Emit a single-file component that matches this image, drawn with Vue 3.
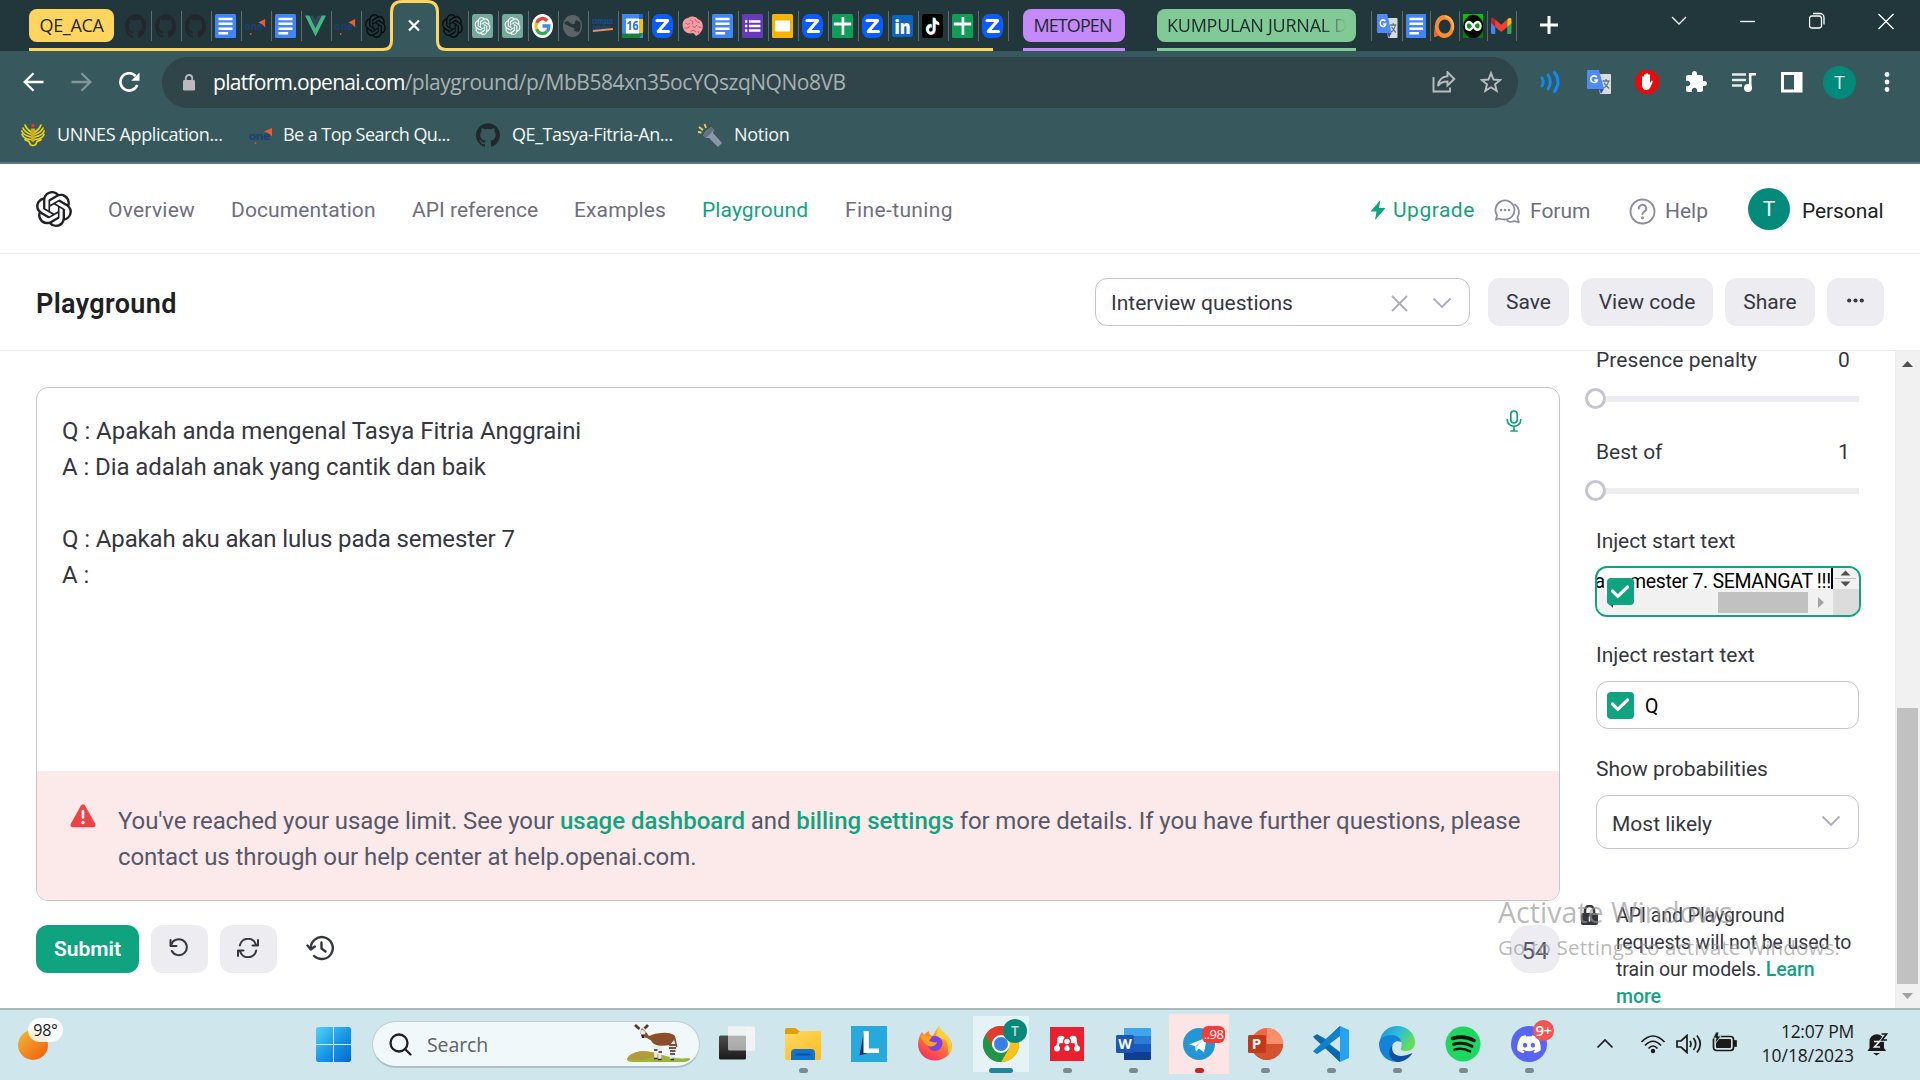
<script setup>
const OPENAI = 'M22.2819 9.8211a5.9847 5.9847 0 0 0-.5157-4.9108 6.0462 6.0462 0 0 0-6.5098-2.9A6.0651 6.0651 0 0 0 4.9807 4.1818a5.9847 5.9847 0 0 0-3.9977 2.9 6.0462 6.0462 0 0 0 .7427 7.0966 5.98 5.98 0 0 0 .511 4.9107 6.051 6.051 0 0 0 6.5146 2.9001A5.9847 5.9847 0 0 0 13.2599 24a6.0557 6.0557 0 0 0 5.7718-4.2058 5.9894 5.9894 0 0 0 3.9977-2.9001 6.0557 6.0557 0 0 0-.7475-7.0729zm-9.022 12.6081a4.4755 4.4755 0 0 1-2.8764-1.0408l.1419-.0804 4.7783-2.7582a.7948.7948 0 0 0 .3927-.6813v-6.7369l2.02 1.1686a.071.071 0 0 1 .038.052v5.5826a4.504 4.504 0 0 1-4.4945 4.4944zm-9.6607-4.1254a4.4708 4.4708 0 0 1-.5346-3.0137l.142.0852 4.783 2.7582a.7712.7712 0 0 0 .7806 0l5.8428-3.3685v2.3324a.0804.0804 0 0 1-.0332.0615L9.74 19.9502a4.4992 4.4992 0 0 1-6.1408-1.6464zM2.3408 7.8956a4.485 4.485 0 0 1 2.3655-1.9728V11.6a.7664.7664 0 0 0 .3879.6765l5.8144 3.3543-2.0201 1.1685a.0757.0757 0 0 1-.071 0l-4.8303-2.7865A4.504 4.504 0 0 1 2.3408 7.872zm16.5963 3.8558L13.1038 8.364 15.1192 7.2a.0757.0757 0 0 1 .071 0l4.8303 2.7913a4.4944 4.4944 0 0 1-.6765 8.1042v-5.6772a.79.79 0 0 0-.407-.667zm2.0107-3.0231l-.142-.0852-4.7735-2.7818a.7759.7759 0 0 0-.7854 0L9.409 9.2297V6.8974a.0662.0662 0 0 1 .0284-.0615l4.8303-2.7866a4.4992 4.4992 0 0 1 6.6802 4.66zM8.3065 12.863l-2.02-1.1638a.0804.0804 0 0 1-.038-.0567V6.0742a4.4992 4.4992 0 0 1 7.3757-3.4537l-.142.0805L8.704 5.459a.7948.7948 0 0 0-.3927.6813zm1.0976-2.3654l2.602-1.4998 2.6069 1.4998v2.9994l-2.5974 1.4997-2.6067-1.4997Z'
const GITHUB = 'M12 .297c-6.63 0-12 5.373-12 12 0 5.303 3.438 9.8 8.205 11.385.6.113.82-.258.82-.577 0-.285-.01-1.04-.015-2.04-3.338.724-4.042-1.61-4.042-1.61C4.422 18.07 3.633 17.7 3.633 17.7c-1.087-.744.084-.729.084-.729 1.205.084 1.838 1.236 1.838 1.236 1.07 1.835 2.809 1.305 3.495.998.108-.776.417-1.305.76-1.605-2.665-.3-5.466-1.332-5.466-5.93 0-1.31.465-2.38 1.235-3.22-.135-.303-.54-1.523.105-3.176 0 0 1.005-.322 3.3 1.23.96-.267 1.98-.399 3-.405 1.02.006 2.04.138 3 .405 2.28-1.552 3.285-1.23 3.285-1.23.645 1.653.24 2.873.12 3.176.765.84 1.23 1.91 1.23 3.22 0 4.61-2.805 5.625-5.475 5.92.42.36.81 1.096.81 2.22 0 1.606-.015 2.896-.015 3.286 0 .315.21.69.825.57C20.565 22.092 24 17.592 24 12.297c0-6.627-5.373-12-12-12'
const TIKTOK = 'M12.525.02c1.31-.02 2.61-.01 3.91-.02.08 1.53.63 3.09 1.75 4.17 1.12 1.11 2.7 1.62 4.24 1.79v4.03c-1.44-.05-2.89-.35-4.2-.97-.57-.26-1.1-.59-1.62-.93-.01 2.92.01 5.84-.02 8.75-.08 1.4-.54 2.79-1.35 3.94-1.31 1.92-3.58 3.17-5.91 3.21-1.43.08-2.86-.31-4.08-1.03-2.02-1.19-3.44-3.37-3.65-5.71-.02-.5-.03-1-.01-1.49.18-1.9 1.12-3.72 2.58-4.96 1.66-1.44 3.98-2.13 6.15-1.72.02 1.48-.04 2.96-.04 4.44-.99-.32-2.15-.23-3.02.37-.63.41-1.11 1.04-1.36 1.75-.21.51-.15 1.07-.14 1.61.24 1.64 1.82 3.02 3.5 2.87 1.12-.01 2.19-.66 2.77-1.61.19-.33.4-.67.41-1.06.1-1.79.06-3.57.07-5.36.01-4.03-.01-8.05.02-12.07z'
const one = '<text x="-.5" y="16.500" font-family="Open Sans, sans-serif" font-weight="700" font-size="11" textLength="21" lengthAdjust="spacingAndGlyphs" fill="#1d3f73">one</text><path d="M15 8.500l8-3.500v8.500l-3-3z" fill="#ee5a36"/><circle cx="6.500" cy="20" r="1" fill="#d9532f"/>'

/* Every glyph is drawn on a 24 × 24 grid. */
const glyphs = {
  github: `<path d="${GITHUB}" fill="#22272b"/>`,
  docs: '<rect width="24" height="24" rx="1.500" fill="#4285f4"/><path d="M4 4.900h16M4 9.800h16M4 14.700h16M4 19.200h11" stroke="#fff" stroke-width="2.500"/>',
  one,
  vue: '<path d="M0 1.500h5l7 12.500 7-12.500h5L12 22.500z" fill="#41b883"/><path d="M5 1.500h4.500L12 6l2.500-4.500H19L12 14z" fill="#35495e"/>',
  openai: `<path d="${OPENAI}" fill="#090d0e"/>`,
  gpt: `<rect width="24" height="24" rx="2.500" fill="#74aa9c"/><g transform="translate(3 3) scale(.75)"><path d="${OPENAI}" fill="#fff"/></g>`,
  google: '<circle cx="12" cy="12" r="12" fill="#fff"/><g fill="none" stroke-width="3.500"><path d="M5.200 9A7.500 7.500 0 0 1 17.400 6.800" stroke="#ea4335"/><path d="M5.200 15.200a7.500 7.500 0 0 1 0-6.400" stroke="#fbbc05"/><path d="M17.100 17.500a7.500 7.500 0 0 1-11.900-2.300" stroke="#34a853"/><path d="M12 12h7.400a7.500 7.500 0 0 1-2.300 5.500" stroke="#4285f4"/></g>',
  globe: '<circle cx="12" cy="12" r="11" fill="#5c6367"/><path d="M3 8c3-1 5-1 6 1 2 0 2 2 5 1l2-4 5 2c1 5 0 8-2 10l-5-1 0-3-4-1-4-2-3-1z" fill="#24363a"/><path d="M9 14.500l5 1.500-2 5-4-2z" fill="#5c6367"/>',
  campus: '<text x="0" y="10" font-family="Open Sans, sans-serif" font-weight="700" font-size="8.500" textLength="24" lengthAdjust="spacingAndGlyphs" fill="#12519b">compus</text><text x="1" y="16" font-family="Open Sans, sans-serif" font-weight="700" font-size="7" textLength="20" lengthAdjust="spacingAndGlyphs" fill="#12519b">connect</text><path d="M1 16l23-2v2L1 18z" fill="#f08e4b"/>',
  cal: '<path d="M0 0h22a2 2 0 0 1 2 2v22H0z" fill="#4285f4"/><path d="M19.500 5H24v14h-4.500z" fill="#fbbc04"/><path d="M19.500 0h2.500a2 2 0 0 1 2 2v3h-4.500z" fill="#1967d2"/><path d="M0 19.500h24L19.500 24H0z" fill="#188038"/><path d="M4.500 4.500h15v15h-15z" fill="#fff"/><text x="12" y="16.500" text-anchor="middle" font-family="Open Sans, sans-serif" font-weight="700" font-size="12" fill="#1f6fd8">16</text>',
  zoom: '<rect width="24" height="24" rx="8" fill="#0b5cff"/><path d="M5.500 6.500h12.500L7 17.500h12" fill="none" stroke="#fff" stroke-width="3.200" stroke-linejoin="round" stroke-linecap="round"/>',
  brain: '<path d="M3 17C-1 12 0 5 7 4c4-3 10-1 11 1 5 1 7 6 5 11l-3 4-4 2-3-3c-4 1-8 0-10-2z" fill="#f59ba2"/><path d="M4 9q3 3 5 0M9 6q4 0 3 4M15 5q1 4 5 3M3 14q4 1 6-2M12 12q3 3 5-1M19 12q1 3 3 1M10 17q4-2 6 1M18 17l2 3" fill="none" stroke="#c8556a" stroke-width="1"/>',
  forms: '<rect width="24" height="24" rx="1.500" fill="#673ab7"/><path d="M8 7.500h13M8 12h13M8 16.500h13" stroke="#fff" stroke-width="2.500"/><path d="M3.500 7.500h2.500M3.500 12h2.500M3.500 16.500h2.500" stroke="#fff" stroke-width="2.500"/>',
  slides: '<rect width="24" height="24" rx="1.500" fill="#f4b400"/><path d="M3.500 6.500h17v11h-17z" fill="#fff"/>',
  sheets: '<rect width="24" height="24" rx="1.500" fill="#0f9d58"/><path d="M2 10h20M12.500 3v18" stroke="#fff" stroke-width="3"/>',
  linkedin: '<rect width="24" height="22" rx="2" y="1" fill="#0a66c2"/><text x="12" y="19.500" text-anchor="middle" font-family="Open Sans, sans-serif" font-weight="800" font-size="18.500" fill="#fff">in</text>',
  tiktok: `<rect width="24" height="24" rx="3" fill="#000"/><g transform="translate(3.200 3.500) scale(.7)"><path d="${TIKTOK}" fill="#25f4ee"/></g><g transform="translate(4.400 4.500) scale(.7)"><path d="${TIKTOK}" fill="#fe2c55"/></g><g transform="translate(3.800 4) scale(.7)"><path d="${TIKTOK}" fill="#fff"/></g>`,
  translate: '<path d="M9 4h14a1 1 0 0 1 1 1v18a1 1 0 0 1-1 1H13z" fill="#d9dcdf"/><path d="M1 0h11l5 19H1a1 1 0 0 1-1-1V1a1 1 0 0 1 1-1z" fill="#4f8bf5"/><path d="M17 19h-5l2 5z" fill="#3a4fc0"/><path d="M15.500 11h7M19 9v2M21.500 11c-.500 3-3 6-5 7M17 13l5 5.500" stroke="#5a7682" stroke-width="1.300" fill="none"/><path d="M9.800 7.300A3.300 3.300 0 1 0 10.300 10H7.200" fill="none" stroke="#fff" stroke-width="1.600"/>',
  orange: '<path d="M12 1a11.500 11.500 0 1 1-7 20.500L0 23l1-9A11.500 11.500 0 0 1 12 1z" fill="#f78c33"/><path d="M1.500 9.500L0 23l6-1.500A11 11 0 0 1 1.500 9.500z" fill="#f15a2b"/><circle cx="12.500" cy="12.500" r="7" fill="#21363a"/><path d="M13 2.500a10 10 0 0 1 9 13" fill="none" stroke="#fdb94d" stroke-width="2.200"/>',
  loop: '<path d="M0 0h24v24H0z" fill="#00c800"/><path d="M0 13h24v11H0z" fill="#067a0c"/><circle cx="12" cy="12.500" r="11.800" fill="#050805"/><path d="M12 12c-2.500-4-5-4.500-7-3.500s-2.500 5.500 0 6.800 5 .7 7-3.300 5-4.500 7-3.500 2.500 5.500 0 6.800-4.500.7-7-3.300z" fill="#0d9a1c" stroke="#fff" stroke-width="2.400"/>',
  gmail: '<path d="M0 6.500h5V20H1.500A1.500 1.500 0 0 1 0 18.500z" fill="#4285f4"/><path d="M19 8h5v10.500a1.500 1.500 0 0 1-1.500 1.500H19z" fill="#34a853"/><path d="M19 5.500l2-1.500c1.500-1 3 .200 3 1.800V9l-5 4z" fill="#fbbc04"/><path d="M5 5.500L3 4C1.500 3 0 4.200 0 5.800V9l5 4z" fill="#c5221f"/><path d="M5 5.500l7 5.300 7-5.300V13l-7 5-7-5z" fill="#ea4335"/>',
  garuda: '<g fill="none" stroke="#ecd510" stroke-width="1.700" stroke-linecap="round"><path d="M10 9C7 7 5 5 4 2M10 11.500C6 10 3 8 2 5M10 14C5 13 2 11 .8 8M9.500 16.500C5 16 2 14 1 11.500M14 9c3-2 5-4 6-7M14 11.500c4-1.500 7-3.500 8-6.500M14 14c5-1 8-3 9.200-6M14.500 16.500c4.500-.5 7.500-2.500 8.500-5"/><path d="M4 16.500c2 1.500 4 1 4.500 3 .5 4 6.500 4 7 0 .5-2 2.500-1.500 4.500-3"/></g><path d="M10 5.500h4v12l-2 2-2-2z" fill="#c9ae18"/><circle cx="12" cy="2.500" r="1.700" fill="#e9352b"/>',
  torch: '<path d="M8 8l5-4 3 3-1 3 9 10-4 4-9-9-3 0-3-3z" fill="#8b97a8"/><path d="M5 12l8-8 3 3-8 8z" fill="#66717f"/><path d="M6.500 1l1.500 4M1 4l4 3M0 9l3.500.5" stroke="#f6cf57" stroke-width="1.800"/>',
  waves: '<g fill="none" stroke="#118af2" stroke-width="3" stroke-linecap="round"><path d="M3 8q2.500 4 0 8"/><path d="M9 5q4.500 7 0 14"/><path d="M15.500 2.500q7 9.500 0 19"/></g>',
  adblock: '<path d="M7 0h10l7 7v10l-7 7H7l-7-7V7z" fill="#e40d0d"/><path d="M7 13V7.300a1 1 0 0 1 2 0V5.200a1 1 0 0 1 2 0V4.200a1 1 0 0 1 2 0v1a1 1 0 0 1 2 0V13l1.500-2.500q1.800 0 1.200 1.500L15 18q-1 2-3.500 2Q7 20 7 15z" fill="#fff"/>',
  puzzle: '<path d="M20.500 11H19V7c0-1.100-.9-2-2-2h-4V3.500C13 2.120 11.880 1 10.500 1S8 2.120 8 3.500V5H4c-1.100 0-1.990.9-1.990 2v3.800H3.500c1.490 0 2.700 1.210 2.700 2.700s-1.210 2.700-2.700 2.700H2V20c0 1.100.9 2 2 2h3.800v-1.500c0-1.490 1.210-2.700 2.700-2.700 1.490 0 2.700 1.210 2.700 2.700V22H17c1.100 0 2-.9 2-2v-4h1.500c1.380 0 2.500-1.120 2.500-2.500S21.880 11 20.500 11z" fill="#fff"/>',
  media: '<path d="M0 4.500h14M0 10h14M0 15.500h10" stroke="#e6ecec" stroke-width="2.300"/><path d="M18.200 17.500V4.200H24" fill="none" stroke="#fff" stroke-width="2.600"/><circle cx="16" cy="18" r="4" fill="#fff"/>',
  panel: '<path d="M2.500 3.500h18.500v17.500H2.500z" fill="none" stroke="#fff" stroke-width="3"/><path d="M14 3h7v18h-7z" fill="#fff"/>',
}
const tabsLeft = ['github', 'github', 'github', 'docs', 'one', 'docs', 'vue', 'one', 'openai']
const tabsRight = ['openai', 'gpt', 'gpt', 'google', 'globe', 'campus', 'cal', 'zoom', 'brain', 'docs', 'forms', 'slides', 'zoom', 'sheets', 'zoom', 'linkedin', 'tiktok', 'sheets', 'zoom']
const tabsEnd = ['translate', 'docs', 'orange', 'loop', 'gmail']
const extensions = ['waves', 'translate', 'adblock', 'puzzle', 'media', 'panel']
const bookmarks = [
  { icon: 'garuda', label: 'UNNES Application...', cls: 'b1' },
  { icon: 'one', label: 'Be a Top Search Qu...', cls: 'b2' },
  { icon: 'github', label: 'QE_Tasya-Fitria-An...', cls: 'b3' },
  { icon: 'torch', label: 'Notion', cls: 'b4' },
]
const nav = [
  { label: 'Overview', cls: 'n1' }, { label: 'Documentation', cls: 'n2' }, { label: 'API reference', cls: 'n3' },
  { label: 'Examples', cls: 'n4' }, { label: 'Playground', cls: 'n5 active' }, { label: 'Fine-tuning', cls: 'n6' },
]

/* Taskbar apps, drawn on a 36 × 36 grid. */
const apps = [
  { name: 'tasks', svg: '<rect y="9.500" width="27" height="24" rx="1.500" fill="url(#dk)"/><rect x="9" y=".5" width="27" height="24" rx="1.500" fill="#f4f4f4" opacity=".62"/><path d="M27 1h8a1 1 0 0 1 1 1v22a1 1 0 0 1-1 1h-8z" fill="#f3f5f5" opacity=".7"/><path d="M9 .5h26v9H9z" fill="#f3f5f5" opacity=".7"/><defs><linearGradient id="dk" x2="0" y2="1"><stop stop-color="#4d4d4d"/><stop offset="1" stop-color="#1b1b1b"/></linearGradient></defs>' },
  { name: 'explorer', run: 1, svg: '<path d="M0 3.500A1.500 1.500 0 0 1 1.500 2h9L14 5h20a2 2 0 0 1 2 2v5H0z" fill="#dfa10b"/><path d="M0 8h12l3-3h19.500A1.500 1.500 0 0 1 36 6.500v26a1.500 1.500 0 0 1-1.500 1.500h-33A1.500 1.500 0 0 1 0 32.500z" fill="url(#fo)"/><path d="M6 34V27a4 4 0 0 1 4-4h16a4 4 0 0 1 4 4v7z" fill="#0f74cf"/><path d="M10.500 28.500h15" stroke="#0b4f94" stroke-width="1.800"/><defs><linearGradient id="fo" x2=".7" y2="1"><stop stop-color="#ffd867"/><stop offset="1" stop-color="#fcc01f"/></linearGradient></defs>' },
  { name: 'ledger', svg: '<rect width="36" height="36" fill="#27aadb"/><path d="M13 5L8.500 29.500 13 27z" fill="#0b2f66"/><path d="M8.500 29.500l4-4H22z" fill="#0b2f66"/><path d="M12.500 5h5.300v17.500H28V27H12.500z" fill="#fff"/>' },
  { name: 'firefox', svg: '<path d="M18 34.500C8 34.500 1 27 1 18c0-5 2-9 4-12l2 3q2-3 5-4c0 3 1 4 3 5 2-1 3-5 7-10 1 4 4 5 7 9 4 4 6 7 6 11 0 8-8 14.500-17 14.500z" fill="url(#ff)"/><path d="M22 0c1 4 4 5 7 9 7 7 7 14 3 19-2-4 0-10-4-14-3-2-8-1-9-5q1-5 3-9z" fill="#ffd83b" opacity=".85"/><circle cx="18" cy="17.500" r="7.500" fill="#7a44e0"/><path d="M3 8c3 2 8 1 12 3l-3 4c4 1 6 2 8 1-2 6-9 5-10 3-3-2-6-5-7-11z" fill="#ff9f26"/><defs><linearGradient id="ff" x1=".8" x2=".2" y2="1"><stop stop-color="#ffd02e"/><stop offset=".55" stop-color="#ff6b36"/><stop offset="1" stop-color="#ee2a6e"/></linearGradient></defs>' },
  { name: 'chrome', tile: 'tile-on', run: 2, badge: 'T', svg: '<circle cx="18" cy="18" r="18" fill="#34a853"/><path d="M2.400 9A18 18 0 0 1 33.600 9H18a9 9 0 0 0-7.800 13.500z" fill="#e33b2e"/><path d="M33.600 9A18 18 0 0 1 18 36l7.800-13.500A9 9 0 0 0 18 9z" fill="#fbc116"/><path d="M18 36A18 18 0 0 1 2.400 9l7.800 13.500A9 9 0 0 0 25.800 22.500z" fill="#229447"/><circle cx="18" cy="18" r="9" fill="#fff"/><circle cx="18" cy="18" r="7" fill="#3a7ee8"/>' },
  { name: 'mendeley', run: 1, svg: '<rect x="1" y="1" width="34" height="34" fill="#e9202f"/><g fill="#fff"><circle cx="12" cy="13.500" r="3.800"/><circle cx="24" cy="13.500" r="3.800"/><circle cx="8" cy="22.500" r="3"/><circle cx="28" cy="22.500" r="3"/><circle cx="18" cy="22.500" r="2.600"/></g><g fill="none" stroke="#fff" stroke-width="2.600"><path d="M10 14l-2 8M26 14l2 8M12 15l6 2 6-2M18 18v4"/></g><circle cx="18" cy="15.500" r="3.400" fill="#fff" stroke="#e9202f" stroke-width="1.300"/>' },
  { name: 'word', run: 1, svg: '<path d="M9 2h26a1 1 0 0 1 1 1v7H9z" fill="#41a5ee"/><path d="M9 10h27v8H9z" fill="#2b7cd3"/><path d="M9 18h27v8H9z" fill="#185abd"/><path d="M9 26h27v7a1 1 0 0 1-1 1H9z" fill="#103f91"/><rect x="1" y="9" width="18" height="18" rx="1.500" fill="#1a56b8"/><text x="10" y="23" text-anchor="middle" font-family="Open Sans, sans-serif" font-weight="700" font-size="14" fill="#fff">W</text>' },
  { name: 'telegram', tile: 'tile-alert', run: 3, badge: '..98', svg: '<circle cx="18" cy="18" r="16" fill="#2596d3"/><path d="M8 18.500L26 11.500 23 26.500l-5-4-3 3-1-5.500z" fill="#fff"/><path d="M14 20l8-6-6 7-1 4.500z" fill="#b9d9ec"/>' },
  { name: 'powerpoint', run: 1, svg: '<circle cx="20" cy="18" r="16" fill="#ed6c47"/><path d="M20 2a16 16 0 0 1 16 16H20z" fill="#ff8f6b"/><path d="M4 18h32a16 16 0 0 1-32 0z" fill="#d35230"/><rect x="1" y="9" width="18" height="18" rx="1.500" fill="#c13b1b"/><text x="9.500" y="23" text-anchor="middle" font-family="Open Sans, sans-serif" font-weight="700" font-size="15" fill="#fff">P</text>' },
  { name: 'vscode', run: 1, svg: '<path d="M27 0l-14 13L4 8.200 0 10.500 10 19 0 25.500l4 2.500 9-6 14 14z" fill="#0c7dc6"/><path d="M4 8.200L27 27v9L.5 11.500z" fill="#0a68ad"/><path d="M4 28l23-18.500V0L.5 24.800z" fill="#0f80cc"/><path d="M27 0l9 4v28l-9 4z" fill="#27a1f0"/><path d="M16.500 18L27 10v16z" fill="#cfe7ec"/>' },
  { name: 'edge', run: 1, svg: '<path d="M1 14C3 5 10 0 18 0c10 0 18 7 18 16 0 6-4 9-9 9-4 0-6-1-5-3 3-7-3-11-9-11-5 0-9 1-12 3z" fill="url(#e1)"/><path d="M0 18c0-6 6-9 13-9 6 0 9 4 9 7-4-2-9 0-9 6 0 8 6 13 13 12-15 6-26-4-26-16z" fill="#1283d9"/><path d="M13.500 20c-2 7 4 14 20 7-4 7-12 10-17 8.500C9 32 8 24 13.500 20z" fill="#114f9e"/><defs><linearGradient id="e1" x1="0" x2="1" y2=".5"><stop stop-color="#1a8fd8"/><stop offset=".55" stop-color="#30c0d5"/><stop offset="1" stop-color="#65dd55"/></linearGradient></defs>' },
  { name: 'spotify', run: 1, svg: '<circle cx="18" cy="18" r="17.500" fill="#1ed760"/><g fill="none" stroke="#06140a" stroke-linecap="round"><path d="M7.500 12.500q11.500-3.500 21.500 2" stroke-width="3.600"/><path d="M8.500 18.300q10-2.800 18.500 1.900" stroke-width="3"/><path d="M9.500 23.600q8-2.200 15.500 1.700" stroke-width="2.500"/></g>' },
  { name: 'discord', run: 1, badge: '9+', svg: '<circle cx="18" cy="18" r="18" fill="#5865f2"/><g transform="translate(6.200 6.500) scale(.98)"><path d="M20.317 4.370a19.790 19.790 0 0 0-4.885-1.515.074.074 0 0 0-.079.037c-.211.375-.445.865-.608 1.250a18.270 18.270 0 0 0-5.487 0 12.640 12.640 0 0 0-.618-1.250.077.077 0 0 0-.078-.037 19.740 19.740 0 0 0-4.885 1.515.07.07 0 0 0-.032.028C.533 9.046-.319 13.580.099 18.058a.082.082 0 0 0 .031.056 19.900 19.900 0 0 0 5.993 3.029.078.078 0 0 0 .084-.027c.462-.630.873-1.295 1.226-1.994a.076.076 0 0 0-.041-.106 13.100 13.100 0 0 1-1.872-.892.077.077 0 0 1-.008-.128l.372-.291a.074.074 0 0 1 .077-.010c3.928 1.793 8.180 1.793 12.062 0a.074.074 0 0 1 .078.009l.373.292a.077.077 0 0 1-.006.128 12.300 12.300 0 0 1-1.873.891.077.077 0 0 0-.041.107c.360.698.772 1.363 1.225 1.993a.076.076 0 0 0 .084.029 19.840 19.840 0 0 0 6.002-3.030.077.077 0 0 0 .032-.055c.500-5.177-.838-9.674-3.549-13.660a.061.061 0 0 0-.031-.029zM8.020 15.331c-1.183 0-2.157-1.086-2.157-2.419s.956-2.419 2.157-2.419c1.211 0 2.176 1.095 2.157 2.419 0 1.333-.956 2.419-2.157 2.419zm7.975 0c-1.183 0-2.157-1.086-2.157-2.419s.955-2.419 2.157-2.419c1.211 0 2.176 1.095 2.157 2.419 0 1.333-.946 2.419-2.157 2.419z" fill="#fff"/></g>' },
]
</script>

<template>
  <div class="screen">
    <header class="tabstrip">
      <div class="group">
        <span class="chip yellow">QE_ACA</span>
        <div v-for="(t, i) in tabsLeft" :key="'l' + i" class="tab" :class="{ last: i === 8 }">
          <svg viewBox="0 0 24 24" preserveAspectRatio="none" v-html="glyphs[t]"></svg>
        </div>
        <div class="tab-active">
          <svg width="70" height="51" viewBox="0 0 70 51" fill="none">
            <path d="M5 51V49.500Q13.500 49.500 13.500 41V12Q13.500 1.500 24 1.500H49Q59.500 1.500 59.500 12V41Q59.500 49.500 68 49.500V51z" fill="#37595d" />
            <path d="M0 49.500H5Q13.500 49.500 13.500 41V12Q13.500 1.500 24 1.500H49Q59.500 1.500 59.500 12V41Q59.500 49.500 68 49.500H70" stroke="#ffd55f" stroke-width="3" />
            <path d="M31 20.500l10 10M41 20.500l-10 10" stroke="#fff" stroke-width="2.200" />
          </svg>
        </div>
        <div v-for="(t, i) in tabsRight" :key="'r' + i" class="tab">
          <svg viewBox="0 0 24 24" preserveAspectRatio="none" v-html="glyphs[t]"></svg>
        </div>
      </div>
      <div class="closed-group purple"><span class="chip">METOPEN</span></div>
      <div class="closed-group green"><span class="chip"><span class="fade">KUMPULAN JURNAL D</span></span></div>
      <div class="loose">
        <div v-for="(t, i) in tabsEnd" :key="'e' + i" class="tab">
          <svg viewBox="0 0 24 24" preserveAspectRatio="none" v-html="glyphs[t]"></svg>
        </div>
      </div>
      <svg class="plus" width="20" height="20" viewBox="0 0 20 20"><path d="M10 1v18M1 10h18" stroke="#fff" stroke-width="3" /></svg>
      <div class="window-buttons">
        <svg width="16" height="18" viewBox="0 0 16 18"><path d="M1 5l7 7 7-7" /></svg>
        <svg width="16" height="18" viewBox="0 0 16 18"><path d="M0 9.500h15" /></svg>
        <svg width="16" height="18" viewBox="0 0 16 18"><rect x=".5" y="4" width="12" height="12" rx="2.500" /><path d="M4 1.500h7a4 4 0 0 1 4 4v7" /></svg>
        <svg width="16" height="18" viewBox="0 0 16 18"><path d="M.5 2l15 15M15.500 2l-15 15" /></svg>
      </div>
    </header>

    <div class="toolbar">
      <div class="history">
        <svg width="21" height="20" viewBox="0 0 21 20"><path d="M20.500 10H2M10.500 1.200L1.700 10l8.800 8.800" stroke="#fff" stroke-width="2.300" fill="none" /></svg>
        <svg width="21" height="20" viewBox="0 0 21 20"><path d="M.5 10H19M10.500 1.200l8.800 8.800-8.800 8.800" stroke="#81979a" stroke-width="2.300" fill="none" /></svg>
        <svg width="21" height="20" viewBox="0 0 21 20"><path d="M18.200 13A8.700 8.700 0 1 1 16.500 4" stroke="#fff" stroke-width="2.600" fill="none" /><path d="M20.500.5v8.300h-8.300z" fill="#fff" /></svg>
      </div>
      <div class="omnibox">
        <svg class="lock" width="12" height="17" viewBox="0 0 12 17"><rect y="6" width="12" height="10.500" rx="1.300" fill="#b9b9bf" /><path d="M2.800 6.500V4.200a3.200 3.200 0 0 1 6.400 0v2.300" stroke="#b9b9bf" stroke-width="1.800" fill="none" /></svg>
        <span class="url"><b>platform.openai.com</b>/playground/p/MbB584xn35ocYQszqNQNo8VB</span>
        <svg class="share" width="24" height="22" viewBox="0 0 24 22"><path d="M1.500 6v14.500h16.500v-4" /><path d="M15.500 1.200l6.800 6.800-6.800 6.500v-4c-4.500 0-7.500 1.200-9.500 4.500.5-5.500 4-9.300 9.500-9.800z" /></svg>
        <svg class="star" width="22" height="22" viewBox="0 0 22 22"><path d="M11 2.200l2.500 6.300 6.700.5-5.200 4.300 1.700 6.600-5.700-3.600-5.700 3.600L7 13.300 1.800 9l6.700-.5z" /></svg>
      </div>
      <div class="extensions">
        <svg v-for="e in extensions" :key="e" width="24" height="24" viewBox="0 0 24 24" v-html="glyphs[e]"></svg>
      </div>
      <span class="profile">T</span>
      <svg class="kebab" width="6" height="20" viewBox="0 0 6 20" fill="#fff"><circle cx="3" cy="2.500" r="2.400" /><circle cx="3" cy="10" r="2.400" /><circle cx="3" cy="17.500" r="2.400" /></svg>
    </div>

    <div class="bookmarks">
      <a v-for="b in bookmarks" :key="b.label" :class="b.cls">
        <svg width="24" height="24" viewBox="0 0 24 24" v-html="glyphs[b.icon]"></svg>
        <span>{{ b.label }}</span>
      </a>
    </div>

    <div class="site-header">
      <svg class="brand" width="36" height="36" viewBox="0 0 24 24"><path :d="OPENAI" fill="#202123" /></svg>
      <nav>
        <a v-for="n in nav" :key="n.label" :class="n.cls">{{ n.label }}</a>
      </nav>
      <div class="account">
        <a class="upgrade"><svg width="16" height="20" viewBox="0 0 16 20"><path d="M10.500 0L.5 11.500h6L5 20l10.500-12H9z" fill="#10a37f" /></svg>Upgrade</a>
        <a class="forum">
          <svg width="27" height="26" viewBox="0 0 27 26" fill="none" stroke="#8e8ea0" stroke-width="1.800" stroke-linejoin="round" stroke-linecap="round"><path d="M4.500 20.500L2 21.800l1-4.600A9.500 9.500 0 1 1 11 21.500c-2.500 0-4.800-.500-6.500-1z" /><path d="M21 6.500a9.800 9.800 0 0 1 2.500 13l1.300 4.800-4.500-1.300c-2 1-5 1-7-.2" /><g fill="#8e8ea0" stroke="none"><circle cx="7" cy="12" r="1.300" /><circle cx="11" cy="12" r="1.300" /><circle cx="15" cy="12" r="1.300" /></g></svg>Forum
        </a>
        <a class="help">
          <svg width="27" height="27" viewBox="0 0 27 27" fill="none" stroke="#8e8ea0" stroke-width="1.900" stroke-linecap="round"><circle cx="13.500" cy="13.500" r="12" /><path d="M9.800 10.500a3.700 3.700 0 1 1 5.500 3.200c-1.300.7-1.800 1.300-1.800 2.600" /><circle cx="13.500" cy="19.800" r=".6" fill="#8e8ea0" /></svg>Help
        </a>
        <span class="avatar">T</span>
        <span class="personal">Personal</span>
      </div>
    </div>

    <div class="page-header">
      <h1>Playground</h1>
      <div class="preset">
        <span>Interview questions</span>
        <svg class="clear" width="17" height="17" viewBox="0 0 17 17"><path d="M1 1l15 15M16 1L1 16" /></svg>
        <svg width="20" height="12" viewBox="0 0 20 12"><path d="M1.500 1.500L10 10l8.500-8.500" /></svg>
      </div>
      <button class="w-save">Save</button>
      <button class="w-view">View code</button>
      <button class="w-share">Share</button>
      <button class="w-more"><svg width="17" height="5" viewBox="0 0 17 5" fill="#353740"><circle cx="2.200" cy="2.500" r="2.100" /><circle cx="8.500" cy="2.500" r="2.100" /><circle cx="14.800" cy="2.500" r="2.100" /></svg></button>
    </div>

    <main>
      <section class="left">
        <div class="editor">
          <div class="prompt">
            <p class="q1">Q : Apakah anda mengenal Tasya Fitria Anggraini</p>
            <p class="q2">A : Dia adalah anak yang cantik dan baik</p>
            <p>&nbsp;</p>
            <p class="q3">Q : Apakah aku akan lulus pada semester 7</p>
            <p>A :</p>
          </div>
          <svg class="mic" width="16" height="22" viewBox="0 0 16 22" fill="none" stroke="#10a37f" stroke-width="1.700" stroke-linecap="round"><rect x="4.800" y="1" width="6.400" height="12" rx="3.200" /><path d="M1.200 9.500c0 4 3 6.800 6.800 6.800s6.800-2.800 6.800-6.800M8 16.500V21M5 21h6" /></svg>
          <div class="error">
            <svg width="26" height="24" viewBox="0 0 26 24"><path d="M13 .5c1 0 1.700.5 2.200 1.300l10 18c.8 1.800 0 3.500-2 3.500H2.800c-2 0-2.800-1.700-2-3.500l10-18C11.300 1 12 .5 13 .5z" fill="#ef4146" /><path d="M13 7v6.500" stroke="#fff" stroke-width="2.600" stroke-linecap="round" /><circle cx="13" cy="18.500" r="1.700" fill="#fff" /></svg>
            <div>
              <p class="e1">You've reached your usage limit. See your <a>usage dashboard</a> and <a>billing settings</a> for more details. If you have further questions, please</p>
              <p class="e2">contact us through our help center at help.openai.com.</p>
            </div>
          </div>
        </div>
        <div class="actions">
          <button class="submit">Submit</button>
          <button class="icon"><svg width="22" height="20" viewBox="0 0 22 20" class="ln"><path d="M2.500 2v6h6" /><path d="M3 7.600A8 8 0 1 1 3.800 13" /></svg></button>
          <button class="icon"><svg width="24" height="20" viewBox="0 0 24 20" class="ln"><path d="M22 2v5.500h-5.500M2 18v-5.500h5.500" /><path d="M3.800 7.500A8.300 8.300 0 0 1 20 7M20.200 12.500A8.300 8.300 0 0 1 4 13" /></svg></button>
          <svg class="clock" width="29" height="26" viewBox="0 0 29 26" fill="none" stroke="#353740" stroke-width="2.400" stroke-linecap="round" stroke-linejoin="round"><path d="M1.500 10.500l3.300 4 4-3" /><path d="M4.800 13.500a11 11 0 1 1 3.400 7.500" /><path d="M15.500 7.500v6l4 3" /></svg>
          <span class="tokens">54</span>
        </div>
      </section>

      <aside>
        <div class="label"><span class="l1">Presence penalty</span><span class="val">0</span></div>
        <div class="slider"><i></i></div>
        <div class="label second"><span>Best of</span><span class="val one">1</span></div>
        <div class="slider"><i></i></div>
        <div class="label start">Inject start text</div>
        <div class="inject focus">
          <div class="typed"><span>a semester 7. SEMANGAT !!!</span></div>
          <svg class="spin" width="25" height="21" viewBox="0 0 25 21"><path d="M0 0h25v21H0z" fill="#f1f1f1" /><path d="M2 10.500h21" stroke="#c1c1c1" stroke-width="1" /><path d="M7.500 7.500L12.500 2.500l5 5zM7.500 13.500l5 5 5-5z" fill="#505050" /></svg>
          <div class="hscroll">
            <svg width="12" height="12" viewBox="0 0 12 12"><path d="M7 0v12L1 6z" fill="#505050" /></svg>
            <i></i>
            <svg width="6" height="11" viewBox="0 0 6 11"><path d="M0 0v11l6-5.500z" fill="#a3a3a3" /></svg>
          </div>
          <div class="corner"></div>
          <span class="check"><svg width="20" height="15" viewBox="0 0 20 15"><path d="M2.500 7l5.300 5.300L17.500 3" fill="none" stroke="#fff" stroke-width="3.200" stroke-linecap="round" /></svg></span>
        </div>
        <div class="label restart">Inject restart text</div>
        <div class="inject">
          <span class="check"><svg width="20" height="15" viewBox="0 0 20 15"><path d="M2.500 7l5.300 5.300L17.500 3" fill="none" stroke="#fff" stroke-width="3.200" stroke-linecap="round" /></svg></span>
          <span class="value">Q</span>
        </div>
        <div class="label probs">Show probabilities</div>
        <div class="select">Most likely<svg width="20" height="12" viewBox="0 0 20 12"><path d="M1.500 1.500L10 10l8.500-8.500" /></svg></div>
        <div class="notice">
          <svg width="17" height="20" viewBox="0 0 17 20"><rect y="8" width="17" height="12" rx="2" fill="#353740" /><path d="M4 9V5.500a4.500 4.500 0 0 1 9 0V9" fill="none" stroke="#353740" stroke-width="2.600" /><path d="M8.500 12v4" stroke="#e8e8ee" stroke-width="1.600" stroke-linecap="round" /></svg>
          <p>API and Playground<br />requests will not be used to<br />train our models. <a>Learn<br />more</a></p>
        </div>
      </aside>
      <div class="scrollbar">
        <svg width="11" height="6" viewBox="0 0 11 6"><path d="M0 6L5.500 0 11 6z" fill="#505050" /></svg>
        <i></i>
        <svg width="11" height="6" viewBox="0 0 11 6"><path d="M0 0l5.500 6L11 0z" fill="#a3a3a3" /></svg>
      </div>
    </main>

    <footer class="taskbar">
      <div class="weather"><i></i><span>98°</span></div>
      <svg class="start-logo" width="35" height="35" viewBox="0 0 35 35">
        <defs><linearGradient id="win" x2="1" y2="1"><stop stop-color="#4fd3fb" /><stop offset=".55" stop-color="#1694e4" /><stop offset="1" stop-color="#0568cf" /></linearGradient></defs>
        <path d="M1.500 0H17v17H0V1.500zM18 0h15.500L35 1.500V17H18zM0 18h17v17H1.500L0 33.500zM18 18h17v15.500L33.500 35H18z" fill="url(#win)" />
      </svg>
      <div class="search">
        <svg width="23" height="23" viewBox="0 0 23 23" fill="none" stroke="#1f1f1f" stroke-width="2.300" stroke-linecap="round"><circle cx="10" cy="10" r="8.500" /><path d="M16 16l5.500 5.500" /></svg>
        <span>Search</span>
        <svg class="okapi" width="64" height="40" viewBox="0 0 64 40">
          <path d="M0 35c3-7 15-9 24-7 10 2 22 8 38 6 3 1-1 4-6 4H6c-4 0-6-1-6-3z" fill="#9cb53c" />
          <path d="M0 35c3-7 15-9 24-7 6 1 8 3 2 5-8 2-18 4-26 2z" fill="#b59a3c" />
          <path d="M26.500 20l1 15h2.500l1-12zM31 20l.5 15.500H34L35 22zM41 20l2 15h2.500V20zM46 18l-1 15h2.500l2-14z" fill="#efe9e4" />
          <path d="M27 26h3.500M31.500 28H35M42 21h7.500M42 24h7M43 27h5.500M43 30h5M27 34.500h3.500M31 35.500h3.500M43.500 35.500h3.500" stroke="#3a2a22" stroke-width="1.400" />
          <path d="M15 4l4 4 3 4q6-3 12-3 10-1 14 3l2.500 11-1.200.5L47 16l-4 5q-6 1-12 .5-5-1-7-5l-4-2.500-5-1-2-5z" fill="#8b4f2c" />
          <path d="M8 1l4.500 4M21 1l-3.500 3.500" stroke="#5b3826" stroke-width="2.800" /><path d="M13 7l1.500 6h3l1-5-3-2.500z" fill="#efe7e0" /><path d="M14 10.500h4l-1 3.500h-2z" fill="#302520" />
        </svg>
      </div>
      <div class="apps">
        <div v-for="a in apps" :key="a.name" class="app" :class="[a.tile, a.name]">
          <svg width="36" height="36" viewBox="0 0 36 36" v-html="a.svg"></svg>
          <span v-if="a.badge" class="badge">{{ a.badge }}</span>
          <i v-if="a.run" class="run" :class="'r' + a.run"></i>
        </div>
      </div>
      <div class="tray">
        <svg class="up" width="18" height="11" viewBox="0 0 18 11"><path d="M1.500 9.500L9 2l7.500 7.500" /></svg>
        <svg class="wifi" width="26" height="20" viewBox="0 0 26 20"><path d="M1.500 8q11.500-12 23 0M5 11.500q8-8.500 16 0M8.500 14.500q4.500-5 9 0" /><circle cx="13" cy="17" r="2.200" fill="#1a1a1a" stroke="none" /></svg>
        <svg class="vol" width="26" height="20" viewBox="0 0 26 20"><path d="M1 7h4l6-5.500v17L5 13H1z" /><path d="M14 7q2 3 0 6M17.500 4q4.500 6 0 12M21 1.500q6.500 8.500 0 17" /></svg>
        <svg class="bat" width="25" height="20" viewBox="0 0 25 20"><rect x="1.500" y="4.500" width="20" height="14" rx="3" /><rect x="4" y="7" width="15" height="9" rx="1" fill="#1a1a1a" stroke="none" /><path d="M22.500 9h1.500v5h-1.500z" fill="#1a1a1a" /><path d="M4 0h3L6 4h3L3 12l1-6H1z" fill="#1a1a1a" stroke="#cfe7ec" stroke-width=".8" /></svg>
        <div class="time"><span class="t1">12:07 PM</span><span class="t2">10/18/2023</span></div>
        <svg class="bell" width="22" height="24" viewBox="0 0 22 24"><path d="M2.500 16V9.500a7 7 0 0 1 14.500 0V16l2 3H.5z" fill="#1a1a1a" stroke="none" /><path d="M6 21h7l-3.500 2.500z" fill="#1a1a1a" stroke="none" /><path d="M7 9.500h5.500L7.500 15h5.500" stroke="#e6f3f5" stroke-width="1.600" /><path d="M14.500 2h5l-4.500 6h5" stroke="#cfe7ec" stroke-width="3.600" /><path d="M14.500 2h5l-4.500 6h5" stroke-width="1.700" /></svg>
      </div>
    </footer>

    <div class="watermark">
      <div class="w1">Activate Windows</div>
      <div class="w2">Go to Settings to activate Windows.</div>
    </div>
  </div>
</template>

<style>
body { margin: 0; overflow: hidden; }
</style>

<style scoped>
* { box-sizing: border-box; }
svg { flex: none; display: block; }
p, h1 { margin: 0; font-weight: 400; }
.screen {
  position: relative; width: 1920px; height: 1080px; overflow: hidden;
  display: flex; flex-direction: column; background: #fff;
  font-family: Roboto, "Liberation Sans", sans-serif; font-size: 21px; color: #353740; white-space: nowrap;
}
.tabstrip, .toolbar, .bookmarks, .taskbar, .watermark { font-family: "Open Sans", "Noto Sans", sans-serif; }
button { border: 0; padding: 0; font: inherit; color: inherit; }

.tabstrip { height: 51px; flex: none; background: #21373b; display: flex; padding-left: 29px; }
.group { width: 964px; height: 51px; flex: none; display: flex; align-items: flex-start; background: linear-gradient(#ffd55f, #ffd55f) 0 48px / 100% 3px no-repeat; border-radius: 3px 3px 0 0; }
.chip { display: block; flex: none; margin-top: 9px; height: 33px; border-radius: 8px; font-size: 18px; line-height: 33px; text-align: center; color: #1d2b2e; }
.yellow { width: 85px; background: #ffd55f; margin-right: 11px; letter-spacing: -.35px; }
.tab { flex: none; width: 30px; height: 51px; padding-top: 14px; background: linear-gradient(#5c6c6f, #5c6c6f) 26px 11px / 1px 30px no-repeat; }
.tab svg { width: 21px; height: 24px; }
.tab.last { background: none; }
.tab-active { flex: none; width: 70px; height: 51px; margin: 0 -6px 0 -17px; }
.closed-group { flex: none; height: 51px; }
.purple { width: 102px; margin-left: 30px; background: linear-gradient(#c58af9, #c58af9) 0 48px / 100% 3px no-repeat; letter-spacing: -.9px; }
.purple .chip { background: #c58af9; padding-right: 3px; }
.green { width: 199px; margin-left: 32px; background: linear-gradient(#81c995, #81c995) 0 48px / 100% 3px no-repeat; letter-spacing: -.25px; }
.green .chip { background: #81c995; padding: 0 10px; text-align: left; }
.fade { display: block; -webkit-mask-image: linear-gradient(90deg, #000 155px, transparent 179px); mask-image: linear-gradient(90deg, #000 155px, transparent 179px); }
.loose { display: flex; flex: none; padding-left: 21px; background: linear-gradient(#5c6c6f, #5c6c6f) 15px 11px / 1px 30px no-repeat; }
.loose .tab { width: 28.600px; background-position-x: 24.500px; }
.loose .tab svg { width: 20.500px; }
.plus { margin: 15px 0 0 19px; }
.window-buttons { display: flex; margin-left: 112px; padding-top: 12px; gap: 53px; }
.window-buttons svg { fill: none; stroke: #fff; stroke-width: 1.300; }

.toolbar { height: 62px; flex: none; background: #37595d; display: flex; align-items: center; }
.history { width: 162px; padding-left: 23px; display: flex; gap: 27px; }
.omnibox { width: 1356px; height: 51px; flex: none; border-radius: 26px; background: #304549; display: flex; align-items: center; padding-left: 21px; }
.url { flex: none; margin-left: 18px; width: 1219px; font-size: 21px; line-height: 30px; letter-spacing: -.47px; color: #a6b1b3; }
.url b { font-weight: 400; color: #fff; letter-spacing: -.72px; }
.omnibox svg { fill: none; stroke: #b9bdbf; stroke-width: 1.900; }
.omnibox .lock { stroke: none; }
.star { margin-left: 24px; }
.extensions { display: flex; gap: 24.200px; margin-left: 21px; }
.profile { width: 33px; height: 33px; margin-left: 19px; border-radius: 50%; background: #018a7c; color: #e8f3f2; font-size: 19px; line-height: 33px; text-align: center; }
.kebab { margin-left: 28px; }

.bookmarks { height: 51px; flex: none; background: #37595d; border-bottom: 2px solid #5d787c; display: flex; align-items: flex-start; padding-top: 10px; color: #f4f7f7; font-size: 18px; }
.bookmarks a { display: flex; align-items: center; gap: 12px; height: 24px; line-height: 24px; }
.bookmarks span { position: relative; top: -1px; }
.b1 { width: 228px; margin-left: 21px; letter-spacing: -.37px; }
.b2 { width: 227px; letter-spacing: -.55px; }
.bookmarks .b2 { gap: 10px; }
.b3 { width: 222px; letter-spacing: -.43px; }
.b4 { letter-spacing: -.3px; }

.site-header { height: 90px; flex: none; border-bottom: 1px solid #ececf1; display: flex; align-items: center; padding: 1px 36px 0 36px; color: #6e6e80; }
.site-header nav { display: flex; margin-left: 36px; padding-top: 1px; }
.site-header nav a { display: block; }
.n1 { width: 123px; letter-spacing: .25px; } .n2 { width: 181px; letter-spacing: .1px; } .n3 { width: 162px; letter-spacing: .03px; } .n4 { width: 128px; letter-spacing: .12px; } .n5 { width: 143px; letter-spacing: .1px; } .n6 { letter-spacing: .38px; }
.active { color: #10a37f; }
.account { margin-left: auto; display: flex; align-items: center; }
.account a { display: flex; align-items: center; }
.upgrade { color: #10a37f; gap: 7px; width: 124px; letter-spacing: .5px; padding-top: 2px; margin-left: -1px; }
.forum { gap: 9px; width: 135px; }
.help { gap: 9px; width: 119px; }
.forum, .help { padding-top: 4px; }
.avatar { width: 42px; height: 42px; border-radius: 50%; background: #048a7b; color: #fff; line-height: 42px; text-align: center; font-size: 21px; }
.personal { margin-left: 12px; width: 82px; color: #202123; letter-spacing: -.1px; padding-top: 3px; }

.page-header { height: 97px; flex: none; border-bottom: 1px solid #ececf1; display: flex; align-items: center; padding: 0 36px; }
h1 { font-size: 27px; font-weight: 600; color: #202123; width: 1059px; letter-spacing: .35px; padding-top: 4px; }
.preset { width: 375px; height: 48px; border: 1px solid #c5c5d2; border-radius: 12px; display: flex; align-items: center; padding: 2px 17px 0 15px; margin-right: 18px; }
.preset span { width: 282px; }
.preset svg, .select svg { fill: none; stroke: #acacbe; stroke-width: 1.900; }
.clear { margin-right: 24px; }
.page-header button { height: 48px; border-radius: 12px; background: #ececf1; }
.w-save { width: 81px; } .w-view { width: 132px; margin-left: 12px; } .w-share { width: 90px; margin-left: 12px; }
.w-more { width: 57px; margin-left: 12px; display: flex; align-items: center; justify-content: center; padding-bottom: 4px !important; }

main { height: 657px; flex: none; display: flex; overflow: hidden; }
.left { width: 1596px; flex: none; padding: 36px 36px 0; }
.editor { height: 514px; border: 1px solid #c5c5d2; border-radius: 12px; overflow: hidden; position: relative; font-size: 24px; line-height: 36px; display: flex; flex-direction: column; justify-content: space-between; }
.prompt { padding: 25px 25px 0; }
.q1 { letter-spacing: -.03px; } .q2 { letter-spacing: -.08px; } .q3 { letter-spacing: -.12px; }
.mic { position: absolute; left: 1469px; top: 22px; }
.error { height: 129px; background: #fceaea; color: #565869; display: flex; padding: 31px 0 0 33px; }
.error svg { margin: 2px 22px 0 0; }
.error p { position: relative; top: 1px; }
.error a, .notice a { color: #10a37f; font-weight: 500; }
.error a { letter-spacing: 0; }
.e1 { letter-spacing: -.1px; } .e2 { letter-spacing: -.08px; }
.actions { display: flex; margin-top: 24px; height: 48px; }
.actions button { height: 48px; border-radius: 12px; background: #ececf1; }
.actions .submit { width: 103px; background: #10a37f; color: #fff; font-weight: 600; }
.actions .icon { width: 57px; margin-left: 12px; display: flex; align-items: center; justify-content: center; padding: 0 2px 2px 0; }
.ln { fill: none; stroke: #353740; stroke-width: 2; stroke-linecap: round; stroke-linejoin: round; }
.clock { margin: 10px 0 0 29px; }
.tokens { margin-left: auto; width: 50px; height: 48px; border-radius: 19px; background: #ececf1; color: #565869; font-size: 24px; line-height: 52px; text-align: center; }

aside { width: 299px; flex: none; padding-right: 36px; margin-top: -4px; }
.label { height: 26px; line-height: 26px; display: flex; justify-content: space-between; }
.l1 { letter-spacing: .06px; }
.val { width: 21px; }
.slider { position: relative; height: 21px; margin-top: 15px; background: linear-gradient(#ececf1, #ececf1) 0 8px / 100% 6px no-repeat; }
.slider i { display: block; width: 21px; height: 21px; margin-left: -11px; border: 3px solid #c5c5d2; border-radius: 50%; background: #fff; }
.second { margin-top: 30px; }
.start { margin-top: 27px; letter-spacing: -.08px; }
.inject { position: relative; width: 263px; height: 48px; margin-top: 13px; border: 1px solid #c5c5d2; border-radius: 12px; display: flex; align-items: center; padding-left: 10px; color: #000; font-size: 19.500px; }
.inject .value { margin-left: 11px; padding-top: 2px; }
.check { width: 27px; height: 27px; border-radius: 4px; background: #10a37f; display: flex; align-items: center; justify-content: center; }
.inject .check svg { margin: -1px 2px 0 0; }
.inject.focus { width: 266px; height: 51px; margin: 12px 0 0 -1px; padding: 0; border: 2px solid #10a37f; overflow: hidden; display: grid; grid-template: 21px 26px / 236px 26px; align-items: stretch; }
.typed { display: flex; justify-content: flex-end; overflow: hidden; border-right: 2px solid #000; line-height: 27px; letter-spacing: -.32px; }
.hscroll { background: #f1f1f1; display: flex; align-items: center; padding-left: 9px; }
.hscroll i { width: 90px; height: 21px; margin: 0 10px 0 100px; background: #c1c1c1; }
.corner { background: #dcdcdc; }
.focus .check { position: absolute; left: 10px; top: 10px; box-shadow: -2px -9px 0 #fff; }
.restart { margin-top: 25px; }
.probs { margin-top: 27px; }
.select { width: 263px; height: 54px; margin-top: 13px; border: 1px solid #c5c5d2; border-radius: 12px; display: flex; align-items: center; justify-content: space-between; padding: 3px 17px 0 15px; }
.select svg { margin-top: -5px; }
.notice { display: flex; margin: 52px 0 0 -15px; font-size: 19.500px; line-height: 27.200px; letter-spacing: -.08px; }
.notice svg { margin: 4px 18px 0 0; }
.notice p { padding-top: .5px; }
.scrollbar { width: 25px; background: #f1f1f1; padding: 10px 0 0 2px; }
.scrollbar svg { margin-left: 5px; }
.scrollbar i { display: block; width: 21px; height: 276px; margin: 341px 0 9px; background: #c1c1c1; }

.taskbar { height: 72px; flex: none; background: #cfe7ec; border-top: 2px solid #a9babd; display: flex; color: #1a1a1a; }
.weather { position: relative; width: 316px; padding: 20px 0 0 18px; }
.weather i { display: block; width: 30px; height: 30px; border-radius: 50%; background: linear-gradient(135deg, #eebf36, #f4831f 55%, #f05a10); }
.weather span { position: absolute; left: 28px; top: 8px; width: 35px; height: 24px; border-radius: 12px; background: rgba(255, 255, 255, .85); font-size: 16px; line-height: 24px; text-align: center; letter-spacing: -.2px; }
.start-logo { margin-top: 17px; }
.search { width: 328px; height: 47px; margin: 11px 0 0 21px; border-radius: 24px; background: #f0f8fa; border: 1px solid #b9d0d5; border-bottom: 2px solid #a9c0c6; display: flex; align-items: center; padding-left: 16px; }
.search span { margin-left: 15px; font-size: 19.500px; letter-spacing: -.1px; color: #5e6366; width: 200px; }
.apps { display: flex; margin-left: 4px; }
.app { position: relative; width: 66px; height: 70px; padding: 16px 15px 0; }
.tile-on { background: linear-gradient(#e5f2f6, #e5f2f6) 5px 6px / 56px 56px no-repeat; }
.tile-alert { background: linear-gradient(#fde4e5, #fde4e5) 3px 4px / 60px 60px no-repeat; }
.run { position: absolute; left: 29px; top: 58px; width: 9px; height: 5px; border-radius: 3px; background: #7b8a8d; }
.r2 { left: 21px; width: 24px; background: #26849a; }
.r3 { background: #c42b1c; }
.badge { position: absolute; text-align: center; color: #fff; }
.chrome .badge { left: 35px; top: 9px; width: 24px; height: 24px; border-radius: 50%; background: #0a8778; font-size: 14px; line-height: 24px; color: #b4dcd8; font-weight: 600; }
.telegram .badge { left: 36px; top: 16px; width: 23px; height: 17px; border-radius: 6px; background: #ef3e3a; font-size: 13px; line-height: 17px; letter-spacing: -.5px; }
.discord .badge { left: 37px; top: 10px; width: 21px; height: 21px; border-radius: 50%; background: #f05455; font-size: 15px; line-height: 20px; letter-spacing: -.5px; font-weight: 600; }
.tray { display: flex; align-items: flex-start; margin-left: 34px; }
.tray svg { fill: none; stroke: #1a1a1a; stroke-width: 1.700; }
.up { margin-top: 28px; }
.wifi { margin: 24px 0 0 26px; }
.vol { margin: 24px 0 0 10px; }
.bat { margin: 22px 0 0 10px; }
.time { width: 117px; padding-top: 9px; display: flex; flex-direction: column; align-items: flex-end; font-size: 17.500px; line-height: 24px; }
.t1 { letter-spacing: -.3px; } .t2 { letter-spacing: -.05px; }
.bell { margin: 22px 0 0 13px; }

.watermark { position: absolute; left: 1498px; top: 892px; color: rgba(150, 150, 150, .68); }
.w1 { font-size: 28.500px; line-height: 40px; letter-spacing: .05px; }
.w2 { font-size: 20.500px; line-height: 30px; letter-spacing: .18px; }
</style>
